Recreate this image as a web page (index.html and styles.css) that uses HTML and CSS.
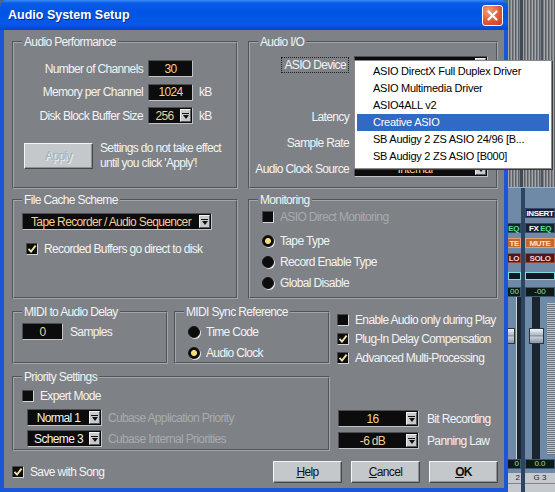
FILE: index.html
```html
<!DOCTYPE html>
<html lang="en">
<head>
    <meta charset="UTF-8">
    <title>Audio System Setup</title>
    <link rel="stylesheet" href="styles.css">
</head>
<body>
    <div class="dialog">
        <div class="titlebar">
            <span class="title">Audio System Setup</span>
            <span class="close">
                <svg width="13" height="13" viewBox="0 0 13 13"><path d="M2.5 2.5 L10.5 10.5 M10.5 2.5 L2.5 10.5" stroke="#fff" stroke-width="2.2" stroke-linecap="round"/></svg>
            </span>
        </div>

        <div class="frame">
            <div class="top-grid">
                <!-- Audio Performance -->
                <fieldset class="group">
                    <legend>Audio Performance</legend>
                    <div class="perf">
                        <span class="lbl">Number of Channels</span>
                        <span class="field">30</span>
                        <span></span>
                        <span class="lbl">Memory per Channel</span>
                        <span class="field">1024</span>
                        <span class="unit">kB</span>
                        <span class="lbl">Disk Block Buffer Size</span>
                        <span class="dropdown"><span class="val">256</span><span class="arrow"></span></span>
                        <span class="unit">kB</span>
                    </div>
                    <div class="apply-row">
                        <button class="btn apply">Apply</button>
                        <span class="note">Settings do not take effect<br>until you click 'Apply'!</span>
                    </div>
                </fieldset>

                <!-- Audio I/O -->
                <fieldset class="group">
                    <legend>Audio I/O</legend>
                    <div class="io">
                        <span class="lbl"><span class="focus">ASIO Device</span></span>
                        <div class="device">
                            <span class="dropdown"><span class="val"></span><span class="arrow"></span></span>
                            <ul class="popup">
                                <li>ASIO DirectX Full Duplex Driver</li>
                                <li>ASIO Multimedia Driver</li>
                                <li>ASIO4ALL v2</li>
                                <li class="sel">Creative ASIO</li>
                                <li>SB Audigy 2 ZS ASIO 24/96 [B...</li>
                                <li>SB Audigy 2 ZS ASIO [B000]</li>
                            </ul>
                        </div>
                        <span></span><span></span>
                        <span class="lbl">Latency</span><span></span>
                        <span class="lbl">Sample Rate</span><span></span>
                        <span class="lbl">Audio Clock Source</span>
                        <span class="dropdown"><span class="val">Internal</span><span class="arrow"></span></span>
                    </div>
                </fieldset>

                <!-- File Cache Scheme -->
                <fieldset class="group">
                    <legend>File Cache Scheme</legend>
                    <span class="dropdown cache"><span class="val">Tape Recorder / Audio Sequencer</span><span class="arrow"></span></span>
                    <label class="opt cache-opt">
                        <span class="check"><svg width="10" height="10" viewBox="0 0 10 10"><path d="M1.5 4.8 L4 7.6 L8.6 1.6" fill="none" stroke="#efe3a8" stroke-width="1.9"/></svg></span>
                        Recorded Buffers go direct to disk
                    </label>
                </fieldset>

                <!-- Monitoring -->
                <fieldset class="group">
                    <legend>Monitoring</legend>
                    <div class="opts mon">
                        <label class="opt dim first"><span class="check"></span>ASIO Direct Monitoring</label>
                        <label class="opt"><span class="radio on"></span>Tape Type</label>
                        <label class="opt"><span class="radio"></span>Record Enable Type</label>
                        <label class="opt"><span class="radio"></span>Global Disable</label>
                    </div>
                </fieldset>
            </div>

            <div class="lower">
                <div class="midi-row">
                    <fieldset class="group">
                        <legend>MIDI to Audio Delay</legend>
                        <div class="delay">
                            <span class="field">0</span>
                            <span>Samples</span>
                        </div>
                    </fieldset>
                    <fieldset class="group">
                        <legend>MIDI Sync Reference</legend>
                        <div class="opts sync">
                            <label class="opt"><span class="radio"></span>Time Code</label>
                            <label class="opt"><span class="radio on"></span>Audio Clock</label>
                        </div>
                    </fieldset>
                </div>

                <div class="opts side">
                    <label class="opt"><span class="check"></span>Enable Audio only during Play</label>
                    <label class="opt"><span class="check"><svg width="10" height="10" viewBox="0 0 10 10"><path d="M1.5 4.8 L4 7.6 L8.6 1.6" fill="none" stroke="#efe3a8" stroke-width="1.9"/></svg></span>Plug-In Delay Compensation</label>
                    <label class="opt"><span class="check"><svg width="10" height="10" viewBox="0 0 10 10"><path d="M1.5 4.8 L4 7.6 L8.6 1.6" fill="none" stroke="#efe3a8" stroke-width="1.9"/></svg></span>Advanced Multi-Processing</label>
                </div>

                <fieldset class="group">
                    <legend>Priority Settings</legend>
                    <label class="opt expert"><span class="check"></span>Expert Mode</label>
                    <div class="prio">
                        <span class="dropdown small"><span class="val">Normal 1</span><span class="arrow"></span></span>
                        <span class="dim">Cubase Application Priority</span>
                        <span class="dropdown small"><span class="val">Scheme 3</span><span class="arrow"></span></span>
                        <span class="dim">Cubase Internal Priorities</span>
                    </div>
                </fieldset>

                <div class="formats">
                    <span class="dropdown"><span class="val">16</span><span class="arrow"></span></span>
                    <span>Bit Recording</span>
                    <span class="dropdown"><span class="val">-6 dB</span><span class="arrow"></span></span>
                    <span>Panning Law</span>
                </div>
            </div>

            <div class="footer">
                <label class="opt"><span class="check"><svg width="10" height="10" viewBox="0 0 10 10"><path d="M1.5 4.8 L4 7.6 L8.6 1.6" fill="none" stroke="#efe3a8" stroke-width="1.9"/></svg></span>Save with Song</label>
                <div class="buttons">
                    <button class="btn"><u>H</u>elp</button>
                    <button class="btn"><u>C</u>ancel</button>
                    <button class="btn ok"><u>O</u>K</button>
                </div>
            </div>
        </div>
    </div>

    <!-- mixer window behind the dialog -->
    <div class="mixer">
        <div class="mixer-top"></div>
        <div class="strips">
            <div class="strip partial">
                <span class="m-btn blank"></span>
                <span class="m-btn dark"><em>EQ</em></span>
                <span class="m-btn mute">TE</span>
                <span class="m-btn solo">LO</span>
                <span class="m-pan"></span>
                <span class="m-disp">00</span>
                <div class="m-fader"><div class="m-track"><span class="m-cap"></span></div></div>
                <span class="m-disp">0</span>
                <span class="m-name">2</span>
                <span class="m-out"></span>
            </div>
            <div class="strip-sep"></div>
            <div class="strip">
                <span class="m-btn dark">INSERT</span>
                <span class="m-btn dark">FX <em>EQ</em></span>
                <span class="m-btn mute">MUTE</span>
                <span class="m-btn solo">SOLO</span>
                <span class="m-pan"></span>
                <span class="m-disp">-00</span>
                <div class="m-fader"><div class="m-track"><span class="m-cap"></span></div><div class="m-meter"></div></div>
                <span class="m-disp">0.0</span>
                <span class="m-name">G 3</span>
                <span class="m-out"></span>
            </div>
        </div>
    </div>
</body>
</html>
```

FILE: styles.css
```css
:root {
    --panel: #7e8287;
    --text: #f3f3f3;
    --dim: #a7abaf;
    --amber: #f1cf98;
    --xp-blue: #1a56d6;
}

* {
    box-sizing: border-box;
}

body {
    margin: 0;
    width: 555px;
    height: 492px;
    overflow: hidden;
    display: flex;
    background: #4d6784;
    font-family: 'Liberation Sans', Arial, sans-serif;
    font-size: 12px;
    color: var(--text);
}

/* ---------- dialog window ---------- */
.dialog {
    width: 508px;
    height: 492px;
    flex: none;
    display: flex;
    flex-direction: column;
}

.titlebar {
    height: 30px;
    flex: none;
    display: flex;
    align-items: center;
    justify-content: space-between;
    padding: 0 5px 0 8px;
    border-radius: 7px 7px 0 0;
    background: linear-gradient(#3a8cf8 0, #0a5ce8 3px, #0054e3 12px, #0858e6 24px, #0346cf 30px);
}

.title {
    font-size: 12.5px;
    font-weight: bold;
    color: #fff;
    text-shadow: 1px 1px 0 #0a2a8a;
}

.close {
    width: 21px;
    height: 21px;
    display: flex;
    align-items: center;
    justify-content: center;
    border: 1px solid #fff;
    border-radius: 3px;
    background: radial-gradient(circle at 30% 25%, #f0a080 0, #dd5a36 55%, #c2401f 100%);
}

.frame {
    flex: 1;
    background: var(--panel);
    border: 4px solid var(--xp-blue);
    border-top: 0;
    padding: 5px 6px 0 8px;
    letter-spacing: -0.65px;
}

.top-grid {
    display: grid;
    grid-template-columns: 226px 250px;
    grid-template-rows: 154px 106px;
    column-gap: 10px;
    row-gap: 4px;
}

.group {
    margin: 0;
    padding: 0;
    min-width: 0;
    border: 2px groove #a2a6aa;
}

.group legend {
    margin-left: 8px;
    padding: 0 2px;
    line-height: 14px;
}

.lbl {
    text-align: right;
    white-space: nowrap;
}

.dim {
    color: var(--dim);
}

/* ---------- fields ---------- */
.field,
.dropdown {
    height: 17px;
    display: flex;
    align-items: center;
    justify-content: center;
    background: #0c0c0c;
    border: 1px solid;
    border-color: #4b4f54 #c0c4c8 #c0c4c8 #4b4f54;
    color: var(--amber);
    white-space: nowrap;
    overflow: hidden;
}

.dropdown .val {
    flex: 1;
    text-align: center;
}

.arrow {
    width: 11px;
    height: 13px;
    margin-right: 1px;
    flex: none;
    display: flex;
    flex-direction: column;
    align-items: center;
    justify-content: center;
    gap: 1px;
    background: #c8cbce;
    border: 1px solid;
    border-color: #f2f2f2 #55595d #55595d #f2f2f2;
}

.arrow::before {
    content: '';
    width: 7px;
    height: 1px;
    background: #111;
}

.arrow::after {
    content: '';
    border-top: 4px solid #111;
    border-left: 3.5px solid transparent;
    border-right: 3.5px solid transparent;
}

/* ---------- checkboxes / radios ---------- */
.opt {
    display: flex;
    align-items: center;
    gap: 6px;
    height: 14px;
    white-space: nowrap;
}

.check,
.radio {
    width: 12px;
    height: 12px;
    flex: none;
    background: #0c0c0c;
}

.check {
    display: flex;
    align-items: center;
    justify-content: center;
    border: 1px solid;
    border-color: #44484c #d2d6da #d2d6da #44484c;
}

.radio {
    border-radius: 50%;
    border: 1px solid #161616;
    box-shadow: 1px 1px 0 #e4e6e8;
}

.radio.on {
    background: radial-gradient(circle, #f6dc78 0 2.6px, #0c0c0c 3.4px);
}

.opts {
    display: flex;
    flex-direction: column;
}

/* ---------- buttons ---------- */
.btn {
    font: inherit;
    letter-spacing: inherit;
    color: #111;
    background: #c5c8cb;
    border: 1px solid;
    border-color: #f4f5f6 #44484c #44484c #f4f5f6;
    box-shadow: inset -1px -1px 0 #8d9195;
    padding: 0;
}

.btn.ok {
    font-weight: bold;
}

/* ---------- Audio Performance ---------- */
.perf {
    display: grid;
    grid-template-columns: 129px 45px auto;
    grid-auto-rows: 17px;
    column-gap: 5px;
    row-gap: 6.5px;
    align-items: center;
    margin-top: 11px;
}

.unit {
    margin-left: 1px;
}

.apply-row {
    display: flex;
    align-items: center;
    gap: 7px;
    margin: 17px 0 0 10px;
}

.btn.apply {
    width: 69px;
    height: 26px;
    color: #a9adb1;
    text-shadow: 1px 1px 0 #eef0f2;
}

.note {
    line-height: 15px;
}

/* ---------- Audio I/O ---------- */
.io {
    display: grid;
    grid-template-columns: 99px 134px;
    grid-auto-rows: 17px;
    column-gap: 5px;
    row-gap: 9px;
    align-items: center;
    margin-top: 7px;
}

.focus {
    border: 1px dotted #222;
    padding: 0 2px;
}

.device {
    position: relative;
}

.popup {
    position: absolute;
    top: 4px;
    left: 0;
    z-index: 10;
    width: 198px;
    margin: 0;
    padding: 2px 2px 3px;
    list-style: none;
    background: #fff;
    border: 1px solid #8a8a8a;
    box-shadow: 1px 1px 0 #3a3a3a;
    color: #000;
    font-size: 11px;
    letter-spacing: -0.25px;
}

.popup li {
    height: 17px;
    line-height: 17px;
    padding-left: 16px;
    white-space: nowrap;
}

.popup li.sel {
    background: #316ac5;
    color: #fff;
}

/* ---------- File Cache / Monitoring ---------- */
.dropdown.cache {
    width: 190px;
    margin: 6px 0 0 8px;
}

.cache-opt {
    margin: 12px 0 0 12px;
}

.mon {
    margin: 3px 0 0 12px;
    gap: 7px;
}

.mon .first {
    margin-bottom: 3px;
}

/* ---------- lower part ---------- */
.lower {
    display: grid;
    grid-template-columns: 318px 160px;
    grid-template-rows: 59px 81px;
    column-gap: 8px;
    row-gap: 6px;
    margin-top: 6px;
}

.midi-row {
    display: flex;
    gap: 6px;
}

.midi-row .group {
    flex: 1;
}

.delay {
    display: flex;
    align-items: center;
    gap: 7px;
    margin: 4px 0 0 8px;
}

.delay .field {
    width: 41px;
}

.sync {
    margin: 6px 0 0 12px;
    gap: 7px;
}

.side {
    padding-top: 8px;
    gap: 5px;
}

.side .check {
    margin-left: -1px;
}

.expert {
    margin: 5px 0 0 8px;
}

.prio {
    display: grid;
    grid-template-columns: 75px auto;
    grid-auto-rows: 17px;
    column-gap: 6px;
    row-gap: 4px;
    align-items: center;
    margin: 6px 0 0 13px;
}

.dropdown.small {
    color: var(--text);
}

.formats {
    display: grid;
    grid-template-columns: 81px auto;
    grid-auto-rows: 17px;
    column-gap: 8px;
    row-gap: 5px;
    align-items: center;
    align-content: start;
    padding-top: 40px;
}

.footer {
    display: flex;
    align-items: center;
    margin-top: 10px;
}

.buttons {
    display: flex;
    gap: 9px;
    margin-left: auto;
}

.buttons .btn {
    width: 69px;
    height: 22px;
}

/* ---------- mixer behind ---------- */
.mixer {
    width: 47px;
    flex: none;
    display: flex;
    flex-direction: column;
    font-size: 8px;
    font-weight: bold;
}

.mixer-top {
    height: 187px;
    flex: none;
    background:
        linear-gradient(90deg, transparent 12px, #3f4a58 12px 15px, transparent 15px 33px, #4a5460 33px 35px, transparent 35px),
        repeating-linear-gradient(90deg, #a3a7ab 0 1px, #5d6165 1px 2px, #7e8286 2px 3px);
}

.strips {
    flex: 1;
    display: flex;
    border-top: 1px solid #9cb2c8;
    overflow: hidden;
}

.strip {
    width: 30px;
    display: flex;
    flex-direction: column;
    padding-top: 20px;
    background: #6f8aa6;
    overflow: hidden;
}

.strip.partial {
    width: 13px;
    text-align: right;
}

.strip.partial .m-btn,
.strip.partial .m-disp,
.strip.partial .m-name {
    text-align: right;
    padding-right: 1px;
    border-left: 0;
}

.strip-sep {
    width: 4px;
    background: #2d4560;
}

.m-btn {
    height: 10px;
    margin-bottom: 5px;
    line-height: 9px;
    text-align: center;
    white-space: nowrap;
    letter-spacing: -0.4px;
    border: 1px solid #3a4a66;
}

.m-btn.blank {
    border: 0;
}

.m-btn.dark {
    background: #17203a;
    color: #fff;
}

.m-btn em {
    font-style: normal;
    color: #5ee08c;
}

.m-btn.mute {
    background: #c2682c;
    color: #ffe2c4;
    border-color: #e8a070;
}

.m-btn.solo {
    background: #4c1a1a;
    color: #f3d2d2;
    border-color: #9a4444;
}

.m-pan {
    height: 8px;
    margin-top: 4px;
    background: #0f1820;
    border: 1px solid #7fdde6;
}

.m-disp {
    height: 10px;
    margin-top: 7px;
    line-height: 8px;
    text-align: center;
    background: #0d1a18;
    color: #86e0a0;
    border: 1px solid #3b5a72;
    font-weight: normal;
}

.m-fader {
    flex: 1;
    display: flex;
}

.m-track {
    width: 22px;
    padding: 31px 0 0 4px;
    background: linear-gradient(90deg, transparent 7px, #1c2430 7px 15px, transparent 15px);
}

.strip.partial .m-track {
    width: 13px;
    padding-left: 0;
    background: linear-gradient(90deg, transparent 8px, #c9d3dc 8px 9px, #1c2430 9px);
}

.strip.partial .m-cap {
    width: 7px;
    border-left: 0;
}

.m-cap {
    display: block;
    width: 15px;
    height: 16px;
    border: 1px solid #2a3440;
    background: linear-gradient(#f2f6fa, #a9b6c4 45%, #4f5c6a 50%, #c8d2dc 55%, #8895a4);
}

.m-meter {
    width: 8px;
    margin: 6px 0 4px;
    background: repeating-linear-gradient(#bcc4cc 0 1px, #6a7480 1px 2px);
}

.m-name {
    height: 10px;
    margin-top: 4px;
    line-height: 10px;
    text-align: center;
    background: #c4c9cf;
    color: #22262c;
    font-weight: normal;
}

.m-fader + .m-disp {
    margin-top: 0;
}

.m-out {
    height: 8px;
    margin-top: 1px;
    background: #c4c9cf;
}
```
